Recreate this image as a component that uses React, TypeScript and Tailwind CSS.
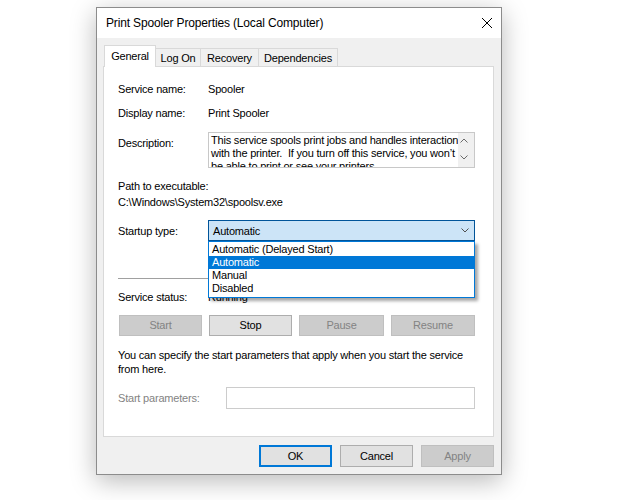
const Chevron = ({ up = false, className = '' }: { up?: boolean; className?: string }) => (
  <svg width="8" height="5" viewBox="0 0 8 5" className={className}>
    <path
      d={up ? 'M0.5 4.5 L4 1 L7.5 4.5' : 'M0.5 0.5 L4 4 L7.5 0.5'}
      fill="none"
      stroke="currentColor"
      strokeWidth="1"
    />
  </svg>
);

const Label = ({ children, w = 'w-[90px]' }: { children: React.ReactNode; w?: string }) => (
  <div className={`${w} shrink-0 leading-[16px]`}>{children}</div>
);

export default function App() {
  return (
    <div className="min-h-[500px] w-[629px] bg-white pl-[96px] pt-[7px] font-['Liberation_Sans',Arial,sans-serif] text-[11px] tracking-[-0.2px] text-black">
      <div className="flex h-[468px] w-[406px] flex-col border border-[#8c8c8c] bg-[#f0f0f0] shadow-[0_6px_24px_rgba(0,0,0,0.28)]">
        {/* title bar */}
        <div className="flex h-[30px] shrink-0 items-center justify-between bg-white pl-[9px] pr-[9px]">
          <span className="text-[12px] tracking-[-0.15px]">Print Spooler Properties (Local Computer)</span>
          <svg width="10" height="10" viewBox="0 0 10 10">
            <path d="M0 0 L10 10 M10 0 L0 10" stroke="#000" strokeWidth="1" />
          </svg>
        </div>

        <div className="flex flex-col pl-[6px] pt-[7px]">
          {/* tabs */}
          <div className="flex h-[21px] items-end pl-[1px]">
            <div className="relative z-10 -mb-[1px] flex h-[22px] w-[52px] items-start justify-center border border-b-0 border-[#d9d9d9] bg-white pt-[3px] leading-[14px]">
              General
            </div>
            <div className="flex h-[18px] w-[45px] items-center justify-center border-r border-t border-[#d9d9d9] leading-[14px]">
              Log On
            </div>
            <div className="flex h-[18px] w-[58px] items-center justify-center border-r border-t border-[#d9d9d9] leading-[14px]">
              Recovery
            </div>
            <div className="flex h-[18px] w-[79px] items-center justify-center border-r border-t border-[#d9d9d9] leading-[14px]">
              Dependencies
            </div>
          </div>

          {/* panel */}
          <div className="h-[371px] w-[391px] border border-[#d9d9d9] bg-white pl-[14px] pt-[14px]">
            <div className="flex w-[358px] flex-col">
              <div className="flex">
                <Label>Service name:</Label>
                <div className="leading-[16px]">Spooler</div>
              </div>
              <div className="mt-[8px] flex">
                <Label>Display name:</Label>
                <div className="leading-[16px]">Print Spooler</div>
              </div>
              <div className="mt-[11px] flex">
                <div className="w-[90px] shrink-0 pt-[3px] leading-[16px]">Description:</div>
                <div className="flex h-[36px] w-[267px] overflow-hidden border border-[#c8c8c8]">
                  <div className="flex-1 whitespace-pre pl-[2px] pt-[1px] leading-[13px]">
                    {'This service spools print jobs and handles interaction\nwith the printer.  If you turn off this service, you won\u2019t\nbe able to print or see your printers.'}
                  </div>
                  <div className="flex w-[16px] shrink-0 flex-col items-start bg-[#f0f0f0] pl-[2px] pt-[5px] text-[#6a6a6a]">
                    <Chevron up />
                    <Chevron className="mt-[12px]" />
                  </div>
                </div>
              </div>
              <div className="mt-[10px] leading-[16px]">Path to executable:</div>
              <div className="leading-[16px]">C:\Windows\System32\spoolsv.exe</div>

              <div className="mt-[10px] flex items-center">
                <Label>Startup type:</Label>
                <div className="relative">
                  <div className="flex h-[21px] w-[267px] items-center justify-between border border-[#005499] bg-[#cce4f7] pl-[4px] pr-[5px]">
                    <span className="leading-[14px]">Automatic</span>
                    <Chevron className="text-[#505050]" />
                  </div>
                  <div className="absolute left-0 top-full z-20 flex h-[57px] w-[267px] flex-col border border-[#0078d7] bg-white pt-[1px] leading-[13px] shadow-[3px_3px_3px_rgba(0,0,0,0.35)]">
                    <div className="h-[13px] pl-[3px]">Automatic (Delayed Start)</div>
                    <div className="h-[13px] bg-[#0078d7] pl-[3px] text-white">Automatic</div>
                    <div className="h-[13px] pl-[3px]">Manual</div>
                    <div className="h-[13px] pl-[3px]">Disabled</div>
                  </div>
                </div>
              </div>

              <div className="mt-[37px] h-px w-[357px] bg-[#a0a0a0]" />

              <div className="mt-[10px] flex">
                <Label>Service status:</Label>
                <div className="leading-[16px]">Running</div>
              </div>

              <div className="mt-[10px] flex gap-[7px] pl-[1px]">
                <div className="flex h-[21px] w-[83px] items-center justify-center border border-[#bfbfbf] bg-[#cccccc] text-[#838383]">Start</div>
                <div className="flex h-[21px] w-[83px] items-center justify-center border border-[#adadad] bg-[#e1e1e1]">Stop</div>
                <div className="flex h-[21px] w-[85px] items-center justify-center border border-[#bfbfbf] bg-[#cccccc] text-[#838383]">Pause</div>
                <div className="flex h-[21px] w-[84px] items-center justify-center border border-[#bfbfbf] bg-[#cccccc] text-[#838383]">Resume</div>
              </div>

              <p className="mt-[12px] leading-[14px]">
                You can specify the start parameters that apply when you start the service
                <br />
                from here.
              </p>

              <div className="mt-[11px] flex items-center">
                <Label w="w-[108px]">
                  <span className="text-[#838383]">Start parameters:</span>
                </Label>
                <div className="h-[22px] w-[249px] border border-[#cccccc] bg-white" />
              </div>
            </div>
          </div>

          {/* dialog buttons */}
          <div className="mt-[8px] flex justify-end gap-[8px] pr-[7px]">
            <div className="flex h-[22px] w-[73px] items-center justify-center border-2 border-[#0078d7] bg-[#e1e1e1]">OK</div>
            <div className="flex h-[22px] w-[73px] items-center justify-center border border-[#adadad] bg-[#e1e1e1]">Cancel</div>
            <div className="flex h-[22px] w-[73px] items-center justify-center border border-[#bfbfbf] bg-[#cccccc] text-[#838383]">Apply</div>
          </div>
        </div>
      </div>
    </div>
  );
}
